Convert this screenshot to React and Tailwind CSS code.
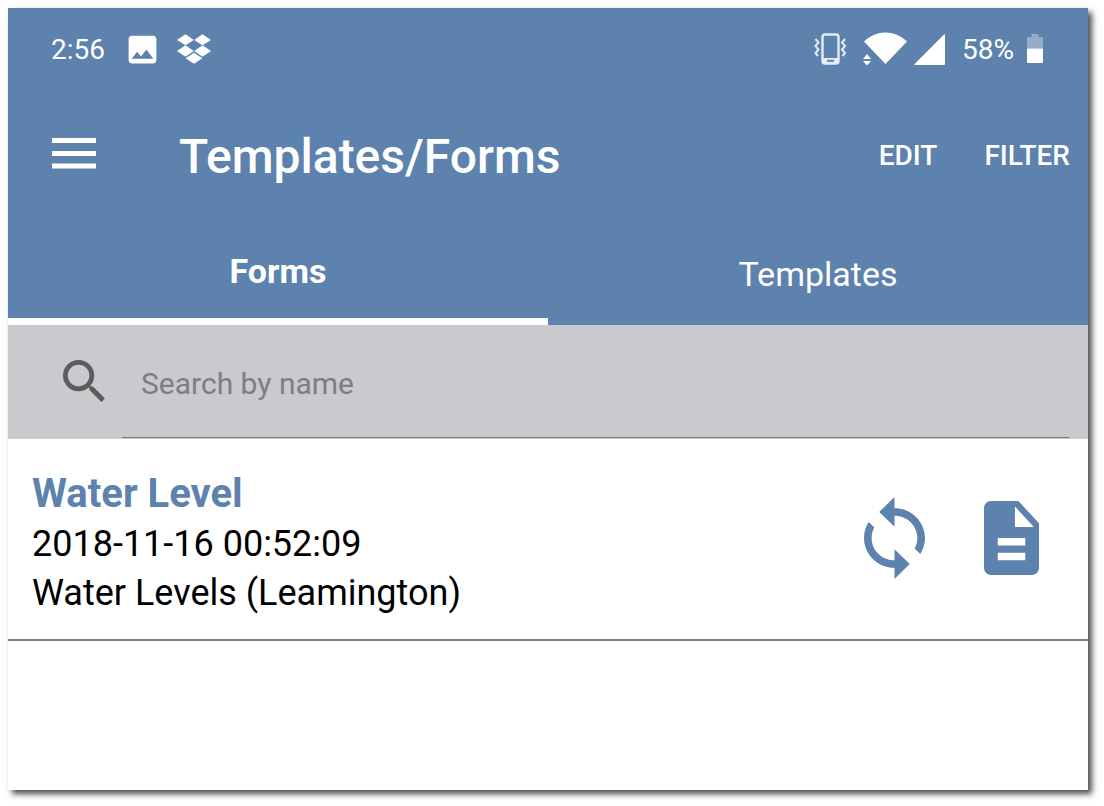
import { useState } from "react";
import clsx from "clsx";
import { MdImage } from "react-icons/md";

const forms = [
  {
    id: 1,
    name: "Water Level",
    date: "2018-11-16 00:52:09",
    template: "Water Levels (Leamington)",
  },
];

const tabs = ["Forms", "Templates"];

const DropboxIcon = () => (
  <svg className="w-[34px] h-[30px]" viewBox="0 0 102 88" fill="currentColor">
    <path d="M25.500 0L50.500 17L25.500 33L0 17zM76.500 0L102 17L76.500 33L51.500 17z" />
    <path d="M25.500 33L50.500 50L25.500 67L0 50zM76.500 33L102 50L76.500 67L51.500 50z" />
    <path d="M51 55L76 72L51 88L26 72z" />
  </svg>
);

const VibrateIcon = () => (
  <svg
    className="w-[33px] h-[32px] text-[#e3ebf5]"
    viewBox="0 0 33 32"
    fill="none"
    stroke="currentColor"
    strokeWidth="2"
  >
    <rect x="8.500" y="1.500" width="16" height="29" rx="2.500" strokeWidth="2.400" />
    <path d="M8 25h17v4a2 2 0 0 1-2 2H10a2 2 0 0 1-2-2z" fill="currentColor" stroke="none" />
    <path d="M13 27.800h7" stroke="#5d82ae" />
    <path d="M1.500 6l3 3.500-3 3.500 3 3.500-3 3.500 2.500 3M31 6l-3 3.500 3 3.500-3 3.500 3 3.500-2.500 3" />
  </svg>
);

const WifiIcon = () => (
  <svg className="w-[44px] h-[34px]" viewBox="0 0 44 34" fill="currentColor">
    <path d="M1 9.500Q10.500 .5 22.500 .5T44 9.500L22.500 32z" />
    <path d="M0 27l4-5 4 5zM0 29h8l-4 4.500z" />
  </svg>
);

const SignalIcon = () => (
  <svg className="w-[31px] h-[31px]" viewBox="0 0 31 31" fill="currentColor">
    <path d="M30 .6q1-1 1 .4v29q0 1-1 1H1q-1.400 0-.4-1z" />
  </svg>
);

const BatteryIcon = () => (
  <svg className="w-[16px] h-[30px]" viewBox="0 0 16 30" fill="currentColor">
    <path d="M4.500 0h7v3H15q1 0 1 1v10.500H0V4q0-1 1-1h3.500z" opacity=".35" />
    <path d="M0 14.500h16V28q0 1-1 1H1q-1 0-1-1z" />
  </svg>
);

const MenuIcon = () => (
  <svg className="w-[44px] h-[31px]" viewBox="0 0 44 31" fill="currentColor">
    <path d="M0 0h44v5H0zM0 13h44v5H0zM0 25.500h44v5H0z" />
  </svg>
);

const SearchIcon = () => (
  <svg className="w-[42px] h-[42px]" viewBox="3 3 17.500 17.500" fill="currentColor">
    <path d="M15.500 14h-.79l-.28-.27A6.471 6.471 0 0 0 16 9.500 6.500 6.500 0 1 0 9.500 16c1.610 0 3.090-.59 4.230-1.570l.27.28v.79l5 4.990L20.490 19l-4.990-5zm-6 0C7.010 14 5 11.990 5 9.500S7.010 5 9.500 5 14 7.010 14 9.500 11.990 14 9.500 14z" />
  </svg>
);

const SyncIcon = () => (
  <svg
    className="w-[61px] h-[82px]"
    viewBox="4 1 16 22"
    preserveAspectRatio="none"
    fill="currentColor"
  >
    <path d="M12 4V1L8 5l4 4V6c3.310 0 6 2.690 6 6 0 1.010-.25 1.970-.7 2.800l1.460 1.460C19.540 15.030 20 13.570 20 12c0-4.420-3.580-8-8-8zm0 14c-3.310 0-6-2.690-6-6 0-1.010.25-1.970.7-2.800L5.240 7.740C4.460 8.970 4 10.430 4 12c0 4.420 3.580 8 8 8v3l4-4-4-4v3z" />
  </svg>
);

const DocumentIcon = () => (
  <svg
    className="w-[55px] h-[74px]"
    viewBox="4 2 16 20"
    preserveAspectRatio="none"
    fill="currentColor"
  >
    <path d="M14 2H6c-1.100 0-1.990.9-1.990 2L4 20c0 1.100.89 2 1.990 2H18c1.100 0 2-.9 2-2V8l-6-6zm2 16H8v-2h8v2zm0-4H8v-2h8v2zm-3-5V3.500L18.500 9H13z" />
  </svg>
);

const StatusBar = () => (
  <div className="flex items-center justify-between h-[82px] pl-[43px] pr-[45px] text-[28px]">
    <div className="flex items-center">
      <span className="pt-0.5">2:56</span>
      <MdImage className="ml-[19px] w-[37px] h-[37px]" />
      <span className="ml-4">
        <DropboxIcon />
      </span>
    </div>
    <div className="flex items-center">
      <VibrateIcon />
      <span className="ml-4">
        <WifiIcon />
      </span>
      <span className="ml-[7px]">
        <SignalIcon />
      </span>
      <span className="ml-[17px] mr-[13px] pt-0.5">58%</span>
      <BatteryIcon />
    </div>
  </div>
);

const App = () => {
  const [activeTab, setActiveTab] = useState("Forms");
  const [search, setSearch] = useState("");

  const shown = forms.filter((form) =>
    form.name.toLowerCase().includes(search.toLowerCase())
  );

  return (
    <div className="flex min-h-screen bg-white pt-2 pl-2 pr-4 pb-4 font-[Roboto,sans-serif]">
      <div className="flex-1 bg-white shadow-[4px_4px_6px_rgba(0,0,0,0.7)]">
        <header className="bg-[#5d82ae] text-white">
          <StatusBar />
          <div className="flex items-center h-[130px] pl-11 pr-[18px]">
            <button aria-label="Menu" className="pb-1">
              <MenuIcon />
            </button>
            <h1 className="ml-[83px] flex-1 pt-1 text-[48px] font-medium">
              Templates/Forms
            </h1>
            <div className="flex gap-[47px] pt-0.5 text-[28px] font-medium">
              <button>EDIT</button>
              <button>FILTER</button>
            </div>
          </div>
          <div className="flex h-[105px]" role="tablist">
            {tabs.map((tab) => (
              <button
                key={tab}
                role="tab"
                aria-selected={tab === activeTab}
                onClick={() => setActiveTab(tab)}
                className={clsx(
                  "flex-1 pt-1 text-[34px]",
                  tab === activeTab && "border-b-[7px] border-white font-bold"
                )}
              >
                {tab}
              </button>
            ))}
          </div>
        </header>

        <div className="flex h-[114px] items-stretch bg-[#cac9ce] pl-[55px] pr-[19px] pb-px">
          <label
            htmlFor="search"
            aria-label="Search by name"
            className="flex items-center pb-0.5 text-[#5c5c5c]"
          >
            <SearchIcon />
          </label>
          <input
            id="search"
            type="text"
            value={search}
            onChange={(e) => setSearch(e.target.value)}
            placeholder="Search by name"
            className="ml-[17px] min-w-0 flex-1 border-b border-[#7b7a80] pt-1 pl-[19px] text-[30px] text-black outline-none placeholder:text-[#7e7d81]"
          />
        </div>

        {activeTab === "Forms" && (
          <ul>
            {shown.map((form) => (
              <li
                key={form.id}
                className="flex items-center border-b-2 border-[#6b8498] pl-6 pr-[49px]"
              >
                <div className="flex-1 pt-[29px] pb-[21px] text-[36px] leading-[49px] text-black">
                  <h2 className="text-[40px] leading-[52px] font-bold text-[#5d82ae]">
                    {form.name}
                  </h2>
                  <p>{form.date}</p>
                  <p>{form.template}</p>
                </div>
                <div className="flex items-center gap-[59px] pb-0.5 text-[#5d82ae]">
                  <button aria-label="Sync form">
                    <SyncIcon />
                  </button>
                  <button aria-label="Open form">
                    <DocumentIcon />
                  </button>
                </div>
              </li>
            ))}
          </ul>
        )}
      </div>
    </div>
  );
};

export default App;
